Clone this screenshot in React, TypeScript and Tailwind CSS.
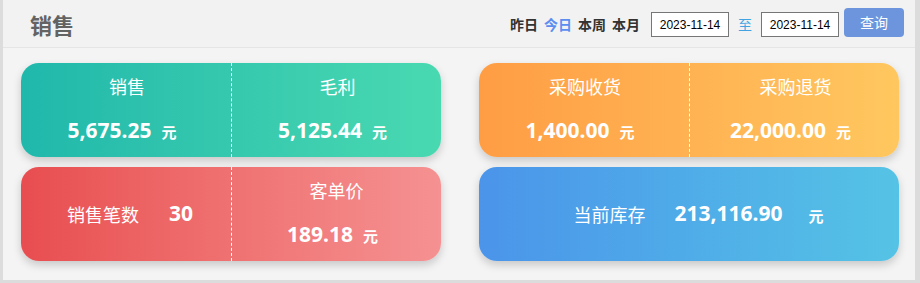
import React from "react";

const cjk = { fontFamily: '"Noto Sans CJK SC", "Noto Sans", sans-serif' };
const num = { fontFamily: '"Noto Sans", "Noto Sans CJK SC", sans-serif' };

function Value({ v }: { v: string }) {
  return (
    <div className="flex items-baseline justify-center pr-[8px]">
      <span className="text-[21px] font-bold leading-none" style={num}>{v}</span>
      <span className="ml-[10px] text-[15px] font-bold leading-none" style={cjk}>元</span>
    </div>
  );
}

function Half({ label, v, divider }: { label: string; v: string; divider?: boolean }) {
  return (
    <div className={(divider ? "w-[211px] shrink-0 border-r border-dashed border-white " : "flex-1 ") + "flex flex-col items-center pt-[11px]"}>
      <div className="text-[18px] leading-[24px] pl-[2px]" style={cjk}>{label}</div>
      <div className="mt-[22px]">
        <Value v={v} />
      </div>
    </div>
  );
}

export default function App() {
  return (
    <div className="w-[920px] h-[283px] bg-[#dcdcdc] pl-[3px] pr-[5px] pb-[3px]" style={cjk}>
      <div className="w-[912px] h-[280px] bg-[#f4f4f4] flex flex-col">
        <div className="h-[48px] bg-[#f2f2f2] border-b border-[#e5e5e5] flex items-center pl-[27px] pr-[11px]">
          <div className="text-[22px] font-bold text-[#636363] leading-none mt-[1px]">销售</div>
          <div className="ml-auto flex items-end h-[29px] mt-[-2px]">
            <div className="flex items-center h-[25px] text-[14px] font-bold text-[#333] gap-[6px] mr-[11px]">
              <span>昨日</span>
              <span className="text-[#5b8ef0]">今日</span>
              <span>本周</span>
              <span>本月</span>
            </div>
            <div className="w-[78px] h-[25px] border border-[#767676] bg-white flex items-center justify-center text-[12px] text-black" style={{ fontFamily: '"Liberation Sans", Arial, sans-serif' }}>
              2023-11-14
            </div>
            <div className="h-[25px] flex items-center mx-[9px] text-[14px] text-[#42a3e3]">至</div>
            <div className="w-[78px] h-[25px] border border-[#767676] bg-white flex items-center justify-center text-[12px] text-black" style={{ fontFamily: '"Liberation Sans", Arial, sans-serif' }}>
              2023-11-14
            </div>
            <div className="ml-[5px] w-[60px] h-[29px] rounded-[4px] bg-[#6c95dd] text-white text-[14px] flex items-center justify-center">
              查询
            </div>
          </div>
        </div>
        <div className="grid grid-cols-2 gap-x-[38px] gap-y-[10px] pl-[18px] pr-[16px] pt-[15px] text-white">
          <div className="h-[94px] rounded-[18px] bg-linear-to-r from-[#1fb8ab] to-[#49d9b1] shadow-[0_4px_8px_rgba(0,0,0,0.18)] flex">
            <Half label="销售" v="5,675.25" divider />
            <Half label="毛利" v="5,125.44" />
          </div>
          <div className="h-[94px] rounded-[18px] bg-linear-to-r from-[#ff9d44] to-[#ffc75f] shadow-[0_4px_8px_rgba(0,0,0,0.18)] flex">
            <Half label="采购收货" v="1,400.00" divider />
            <Half label="采购退货" v="22,000.00" />
          </div>
          <div className="h-[94px] rounded-[18px] bg-linear-to-r from-[#e84d50] to-[#f59192] shadow-[0_4px_8px_rgba(0,0,0,0.18)] flex">
            <div className="w-[211px] shrink-0 border-r border-dashed border-white flex items-center justify-center pl-[8px]">
              <span className="text-[18px]" style={cjk}>销售笔数</span>
              <span className="ml-[30px] text-[21px] font-bold" style={num}>30</span>
            </div>
            <div className="flex-1 flex flex-col items-center pt-[11px]">
              <div className="text-[18px] leading-[24px]" style={cjk}>客单价</div>
              <div className="mt-[22px]">
                <Value v="189.18" />
              </div>
            </div>
          </div>
          <div className="h-[94px] rounded-[18px] bg-linear-to-r from-[#4b94ea] to-[#55c3e5] shadow-[0_4px_8px_rgba(0,0,0,0.18)] flex items-center justify-center pl-[19px]">
            <span className="text-[18px]" style={cjk}>当前库存</span>
            <span className="ml-[29px] text-[21px] font-bold" style={num}>213,116.90</span>
            <span className="ml-[26px] text-[15px] font-bold mt-[4px]" style={cjk}>元</span>
          </div>
        </div>
      </div>
    </div>
  );
}
